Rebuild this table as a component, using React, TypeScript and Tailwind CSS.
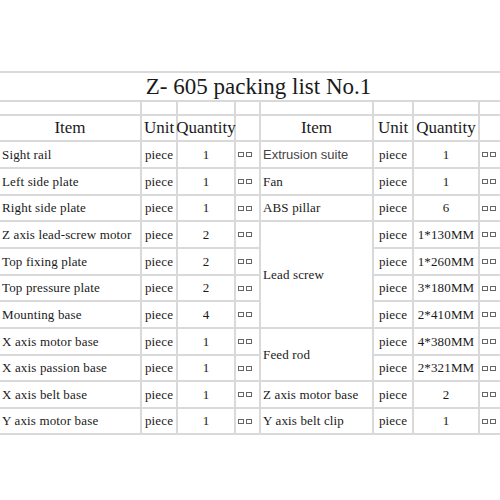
const serif = "font-['Liberation_Serif','Times_New_Roman',serif]";

const leftRows: [string, string][] = [
  ["Sight rail", "1"],
  ["Left side plate", "1"],
  ["Right side plate", "1"],
  ["Z axis lead-screw motor", "2"],
  ["Top fixing plate", "2"],
  ["Top pressure plate", "2"],
  ["Mounting base", "4"],
  ["X axis motor base", "1"],
  ["X axis passion base", "1"],
  ["X axis belt base", "1"],
  ["Y axis motor base", "1"],
];

// right side: item name (or null when covered by a merged cell), row span, quantity
const rightRows: { item: string | null; span?: number; qty: string; sans?: boolean }[] = [
  { item: "Extrusion suite", qty: "1", sans: true },
  { item: "Fan", qty: "1" },
  { item: "ABS pillar", qty: "6" },
  { item: "Lead screw", span: 4, qty: "1*130MM" },
  { item: null, qty: "1*260MM" },
  { item: null, qty: "3*180MM" },
  { item: null, qty: "2*410MM" },
  { item: "Feed rod", span: 2, qty: "4*380MM" },
  { item: null, qty: "2*321MM" },
  { item: "Z axis motor base", qty: "2" },
  { item: "Y axis belt clip", qty: "1" },
];

const rowSpans = ["", "row-span-2", "row-span-3", "row-span-4"];

function Boxes() {
  return (
    <div className="flex items-center gap-[2px] bg-white pl-[2px]">
      <span className="h-[5px] w-[6px] border border-[#666]" />
      <span className="h-[5px] w-[6px] border border-[#666]" />
    </div>
  );
}

function Cell({ children, className = "" }: { children?: React.ReactNode; className?: string }) {
  return (
    <div className={`flex items-center whitespace-nowrap bg-white ${className}`}>
      {children}
    </div>
  );
}

export default function App() {
  return (
    <div className={`h-[500px] w-[500px] overflow-hidden bg-white pt-[71px] text-[#1a1a1a] ${serif}`}>
      <div className="flex h-[31px] items-center justify-center border-y-2 border-[#d9d9d9] pl-[17px] text-[23px] leading-none">
        Z- 605 packing list No.1
      </div>
      <div className="grid w-[520px] grid-cols-[140px_34px_56px_23px_111px_38px_64px_1fr] grid-rows-[12px_24px_25px_25px_24px_25px_25px_24px_25px_25px_24px_25px_24px] gap-[2px] border-b-2 border-[#d9d9d9] bg-[#d9d9d9] text-[13px] tracking-[0.15px]">
        {Array.from({ length: 8 }).map((_, i) => (
          <div key={`b${i}`} className="bg-white" />
        ))}

        <Cell className="justify-center text-[17px] tracking-normal">Item</Cell>
        <Cell className="justify-center text-[17px] tracking-normal">Unit</Cell>
        <Cell className="justify-center text-[17px] tracking-normal">Quantity</Cell>
        <Cell />
        <Cell className="justify-center text-[17px] tracking-normal">Item</Cell>
        <Cell className="justify-center text-[17px] tracking-normal">Unit</Cell>
        <Cell className="justify-center text-[17px] tracking-normal">Quantity</Cell>
        <Cell />

        {leftRows.map(([name, qty], i) => {
          const r = rightRows[i];
          return (
            <div key={name} className="contents">
              <Cell className="pl-[2px]">{name}</Cell>
              <Cell className="justify-center">piece</Cell>
              <Cell className="justify-center">{qty}</Cell>
              <Boxes />
              {r.item !== null && (
                <Cell
                  className={`pl-[2px] ${rowSpans[(r.span ?? 1) - 1]} ${
                    r.sans ? "font-['Liberation_Sans',Arial,sans-serif] tracking-normal text-[#444]" : ""
                  }`}
                >
                  {r.item}
                </Cell>
              )}
              <Cell className="justify-center">piece</Cell>
              <Cell className="justify-center">{r.qty}</Cell>
              <Boxes />
            </div>
          );
        })}
      </div>
    </div>
  );
}
